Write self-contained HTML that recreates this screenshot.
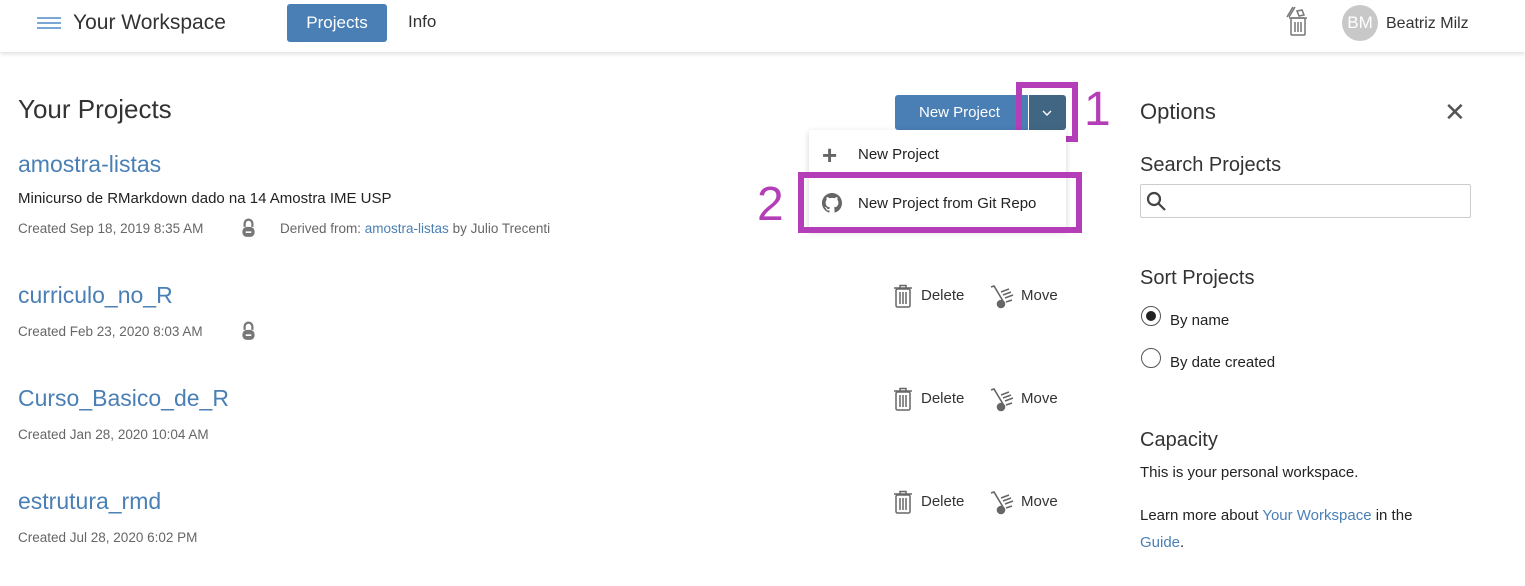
<!DOCTYPE html>
<html><head><meta charset="utf-8"><style>
*{margin:0;padding:0;box-sizing:border-box}
body{width:1525px;height:586px;background:#fff;font-family:"Liberation Sans",sans-serif;color:#222;position:relative;overflow:hidden}
.a{position:absolute;white-space:nowrap}
.hdr{position:absolute;left:0;top:0;width:1525px;height:52px;background:#fff;box-shadow:0 2px 4px rgba(0,0,0,.12)}
.link{color:#4a7fb5}
.gray{color:#666;font-size:13.5px}
.pt{font-size:23px;color:#4a7fb5}
.act{font-size:15px;color:#333}
.mag{position:absolute;border:6px solid #b43db8}
</style></head><body>
<div class="hdr"></div>
<div class="a" style="left:37px;top:17px;width:24px">
<div style="height:2px;background:#7aa7d8;margin-bottom:3px"></div><div style="height:2px;background:#7aa7d8;margin-bottom:3px"></div><div style="height:2px;background:#7aa7d8"></div></div>
<div class="a" style="left:73px;top:11px;font-size:21px;color:#333">Your Workspace</div>
<div class="a" style="left:287px;top:4px;width:100px;height:38px;background:#4a7fb5;border-radius:3px;color:#fff;font-size:17px;text-align:center;line-height:37px">Projects</div>
<div class="a" style="left:408px;top:12px;font-size:17px;color:#333">Info</div>
<svg class="a" style="left:1284px;top:5px" width="28" height="32" viewBox="0 0 28 32" fill="none" stroke="#777" stroke-width="1.5"><path d="M3 12 L9 2 M5 12 L11 2"/><rect x="7" y="13" width="14" height="17" rx="1"/><path d="M5 13h18M11 17v10M14 17v10M17 17v10M13 6l5 -1 2 5-5 1z"/></svg>
<div class="a" style="left:1342px;top:5px;width:36px;height:36px;border-radius:50%;background:#c8c8c8;color:#fff;font-size:17px;text-align:center;line-height:36px">BM</div>
<div class="a" style="left:1386px;top:15px;font-size:16px;color:#333">Beatriz Milz</div>

<div class="a" style="left:18px;top:94px;font-size:26px;color:#333">Your Projects</div>
<div class="a" style="left:895px;top:95px;width:133px;height:35px;background:#4a7fb5;border-radius:3px 0 0 3px;color:#fff;font-size:15px;line-height:35px;padding-left:24px">New Project</div>
<div class="a" style="left:1029px;top:95px;width:37px;height:35px;background:#416684;border-radius:0 3px 3px 0"></div>
<svg class="a" style="left:1041px;top:109px" width="12" height="8" viewBox="0 0 12 8" fill="none" stroke="#fff" stroke-width="1.4"><path d="M2 2l4 4 4-4"/></svg>
<div class="mag" style="left:1016px;top:82px;width:62px;height:60px"></div>
<div class="a" style="left:1084px;top:80px;font-size:48px;color:#b43db8;line-height:60px">1</div>

<div class="a" style="left:809px;top:130px;width:257px;height:100px;background:#fff;box-shadow:0 2px 6px rgba(0,0,0,.18)"></div>
<div class="a" style="left:822px;top:144px;font-size:26px;color:#666;line-height:22px;font-weight:bold">+</div>
<div class="a" style="left:858px;top:146px;font-size:15px;color:#222">New Project</div>
<div class="mag" style="left:798px;top:172px;width:284px;height:61px"></div>
<svg class="a" style="left:822px;top:193px" width="20" height="20" viewBox="0 0 16 16"><path fill="#666" d="M8 0C3.58 0 0 3.58 0 8c0 3.540 2.290 6.530 5.470 7.590.4.07.55-.17.55-.38v-1.34c-2.230.48-2.700-1.070-2.700-1.070-.36-.92-.89-1.170-.89-1.170-.73-.5.05-.49.05-.49.8.06 1.230.83 1.230.83.71 1.220 1.870.87 2.330.66.07-.52.28-.87.51-1.070-1.780-.2-3.640-.89-3.640-3.950 0-.87.31-1.590.83-2.150-.08-.2-.36-1.020.08-2.120 0 0 .67-.21 2.200.82.64-.18 1.320-.27 2-.27.68 0 1.360.09 2 .27 1.530-1.040 2.200-.82 2.200-.82.44 1.100.16 1.920.08 2.120.51.56.82 1.270.82 2.150 0 3.070-1.870 3.750-3.650 3.950.29.25.54.73.54 1.480v2.200c0 .21.15.46.55.38A8.013 8.013 0 0016 8c0-4.420-3.580-8-8-8z"/></svg>
<div class="a" style="left:858px;top:195px;font-size:15px;color:#222">New Project from Git Repo</div>
<div class="a" style="left:757px;top:175px;font-size:48px;color:#b43db8;line-height:60px">2</div>

<div class="a pt" style="left:18px;top:151px">amostra-listas</div>
<div class="a" style="left:18px;top:190px;font-size:15px;color:#222">Minicurso de RMarkdown dado na 14 Amostra IME USP</div>
<div class="a gray" style="left:18px;top:221px">Created Sep 18, 2019 8:35 AM</div>
<svg class="a" style="left:241px;top:218px" width="15" height="20" viewBox="0 0 13 18"><path d="M3 8V5a3.5 3.5 0 017 0v3" stroke="#777" stroke-width="2" fill="none"/><rect x="1" y="8" width="11" height="9" rx="4" fill="#777"/><rect x="4" y="12" width="5" height="1.5" fill="#fff"/></svg>
<div class="a gray" style="left:280px;top:221px">Derived from: <span class="link">amostra-listas</span> by Julio Trecenti</div>

<div class="a pt" style="left:18px;top:282px">curriculo_no_R</div>
<div class="a gray" style="left:18px;top:324px">Created Feb 23, 2020 8:03 AM</div>
<svg class="a" style="left:241px;top:321px" width="15" height="20" viewBox="0 0 13 18"><path d="M3 8V5a3.5 3.5 0 017 0v3" stroke="#777" stroke-width="2" fill="none"/><rect x="1" y="8" width="11" height="9" rx="4" fill="#777"/><rect x="4" y="12" width="5" height="1.5" fill="#fff"/></svg>

<div class="a pt" style="left:18px;top:385px">Curso_Basico_de_R</div>
<div class="a gray" style="left:18px;top:427px">Created Jan 28, 2020 10:04 AM</div>

<div class="a pt" style="left:18px;top:488px">estrutura_rmd</div>
<div class="a gray" style="left:18px;top:530px">Created Jul 28, 2020 6:02 PM</div>

<div class="a" style="left:892px;top:284px">
<svg width="22" height="24" viewBox="0 0 22 24" fill="none" stroke="#666" stroke-width="1.5"><path d="M2 4h18M8 4V1.5h6V4"/><rect x="4" y="5" width="14" height="18" rx="1.5"/><path d="M8 8v12M11 8v12M14 8v12"/></svg></div>
<div class="a act" style="left:921px;top:287px">Delete</div>
<svg class="a" style="left:989px;top:284px" width="28" height="26" viewBox="0 0 28 26" fill="none" stroke="#666" stroke-width="1.6"><path d="M2 3l3-1 9 15M12 8l8-3M14 11l8-3M16 14l8-3M17 18l6-2"/><circle cx="12" cy="20" r="3.5" fill="#666"/></svg>
<div class="a act" style="left:1021px;top:287px">Move</div>

<div class="a" style="left:892px;top:387px">
<svg width="22" height="24" viewBox="0 0 22 24" fill="none" stroke="#666" stroke-width="1.5"><path d="M2 4h18M8 4V1.5h6V4"/><rect x="4" y="5" width="14" height="18" rx="1.5"/><path d="M8 8v12M11 8v12M14 8v12"/></svg></div>
<div class="a act" style="left:921px;top:390px">Delete</div>
<svg class="a" style="left:989px;top:387px" width="28" height="26" viewBox="0 0 28 26" fill="none" stroke="#666" stroke-width="1.6"><path d="M2 3l3-1 9 15M12 8l8-3M14 11l8-3M16 14l8-3M17 18l6-2"/><circle cx="12" cy="20" r="3.5" fill="#666"/></svg>
<div class="a act" style="left:1021px;top:390px">Move</div>

<div class="a" style="left:892px;top:490px">
<svg width="22" height="24" viewBox="0 0 22 24" fill="none" stroke="#666" stroke-width="1.5"><path d="M2 4h18M8 4V1.5h6V4"/><rect x="4" y="5" width="14" height="18" rx="1.5"/><path d="M8 8v12M11 8v12M14 8v12"/></svg></div>
<div class="a act" style="left:921px;top:493px">Delete</div>
<svg class="a" style="left:989px;top:490px" width="28" height="26" viewBox="0 0 28 26" fill="none" stroke="#666" stroke-width="1.6"><path d="M2 3l3-1 9 15M12 8l8-3M14 11l8-3M16 14l8-3M17 18l6-2"/><circle cx="12" cy="20" r="3.5" fill="#666"/></svg>
<div class="a act" style="left:1021px;top:493px">Move</div>

<div class="a" style="left:1140px;top:99px;font-size:22px;color:#333">Options</div>
<div class="a" style="left:1444px;top:97px;font-size:26px;color:#555">&#x2715;</div>
<div class="a" style="left:1140px;top:154px;font-size:20px;color:#333">Search Projects</div>
<div class="a" style="left:1140px;top:184px;width:331px;height:34px;border:1px solid #ccc;border-radius:2px"></div>
<svg class="a" style="left:1146px;top:191px" width="22" height="22" viewBox="0 0 22 22" fill="none" stroke="#444" stroke-width="2.2"><circle cx="8" cy="8" r="6"/><path d="M12.5 12.5L19 19"/></svg>
<div class="a" style="left:1140px;top:267px;font-size:20px;color:#333">Sort Projects</div>
<div class="a" style="left:1141px;top:306px;width:20px;height:20px;border:1.5px solid #555;border-radius:50%"><div style="width:10px;height:10px;background:#222;border-radius:50%;margin:3.5px"></div></div>
<div class="a" style="left:1170px;top:312px;font-size:15px;color:#222">By name</div>
<div class="a" style="left:1141px;top:348px;width:20px;height:20px;border:1.5px solid #555;border-radius:50%"></div>
<div class="a" style="left:1170px;top:354px;font-size:15px;color:#222">By date created</div>
<div class="a" style="left:1140px;top:429px;font-size:20px;color:#333">Capacity</div>
<div class="a" style="left:1140px;top:464px;font-size:15px;color:#222">This is your personal workspace.</div>
<div class="a" style="left:1140px;top:507px;font-size:15px;color:#222">Learn more about <span class="link">Your Workspace</span> in the</div>
<div class="a" style="left:1140px;top:534px;font-size:15px;color:#222"><span class="link">Guide</span>.</div>
</body></html>
